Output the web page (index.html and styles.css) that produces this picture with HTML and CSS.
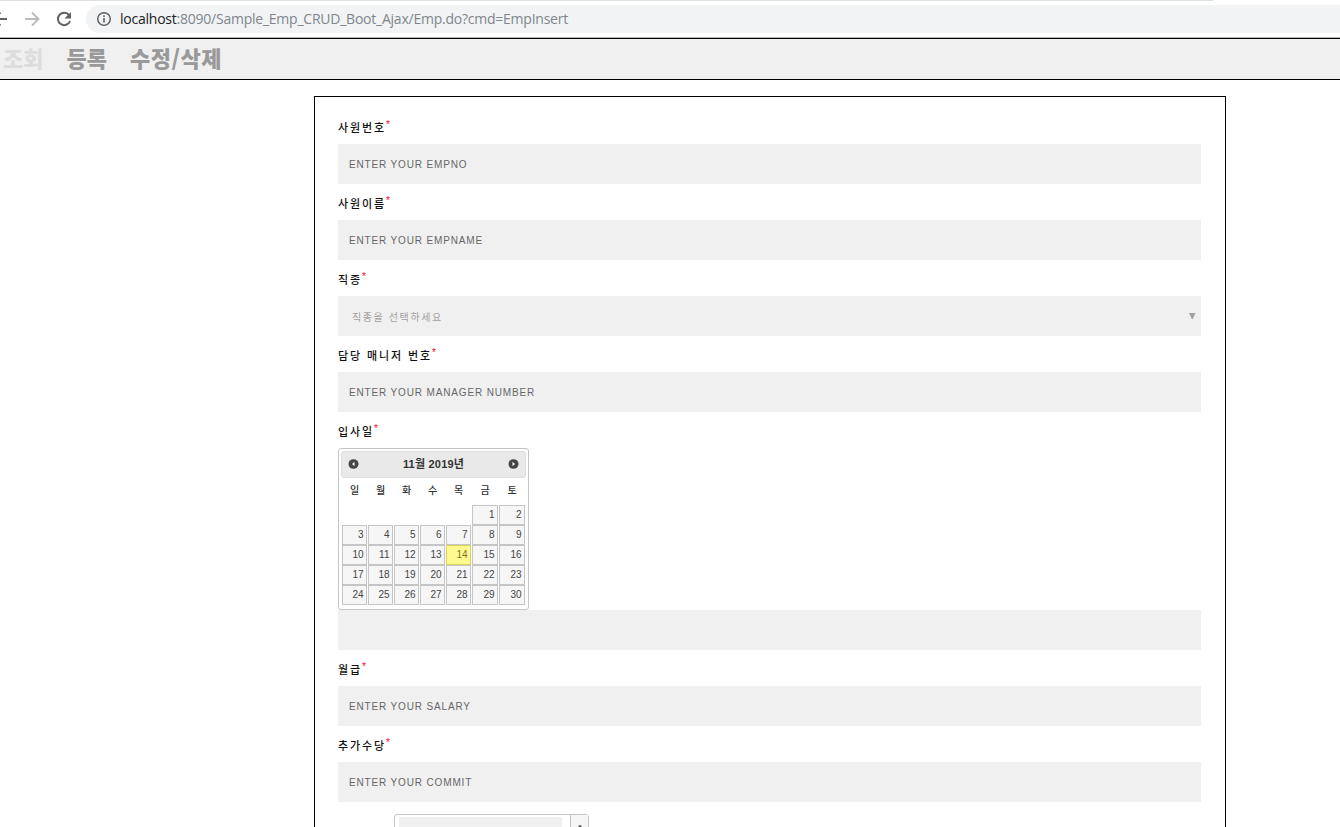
FILE: index.html
```html
<!DOCTYPE html>
<html lang="ko">
<head>
<meta charset="utf-8">
<title>Emp Insert</title>
<link rel="stylesheet" href="styles.css">
</head>
<body>
<header class="browser">
  <div class="tab-edge"></div>
  <div class="toolbar">
    <svg class="nav-icons" width="86" height="28" viewBox="0 0 86 28" fill="none" stroke-width="1.9">
      <path d="M-8 14H7M.5 7.500L-6 14l6.500 6.500" stroke="#5f6368"/>
      <path d="M25 14H38M32 7.500L38.500 14L32 20.500" stroke="#babcbe"/>
      <path d="M69.200 10.300A6.200 6.200 0 1 0 70 16" stroke="#5f6368" stroke-width="2"/>
      <path d="M71 7v6.500h-6.500z" fill="#5f6368"/>
    </svg>
    <div class="omnibox">
      <svg width="16" height="16" viewBox="0 0 16 16" fill="none" stroke="#5f6368">
        <circle cx="8" cy="8" r="6.300" stroke-width="1.500"/>
        <path d="M8 7v4.500M8 4.300v1.700" stroke-width="1.600"/>
      </svg>
      <span class="url"><span class="host">localhost</span>:8090/Sample_Emp_CRUD_Boot_Ajax/Emp.do?cmd=EmpInsert</span>
    </div>
  </div>
</header>
<nav class="menu">
  <a class="menu-item faded">조회</a>
  <a class="menu-item">등록</a>
  <a class="menu-item wide">수정/삭제</a>
</nav>
<form class="form">
  <label class="label">사원번호<span class="req">*</span></label>
  <input class="field" placeholder="ENTER YOUR EMPNO">
  <label class="label">사원이름<span class="req">*</span></label>
  <input class="field" placeholder="ENTER YOUR EMPNAME">
  <label class="label">직종<span class="req">*</span></label>
  <div class="field select"><span>직종을 선택하세요</span>
    <svg width="7" height="7" viewBox="0 0 7 7"><path d="M0 0h6.500L3.800 6h-1z" fill="#a59f9f"/></svg>
  </div>
  <label class="label">담당 매니저 번호<span class="req">*</span></label>
  <input class="field" placeholder="ENTER YOUR MANAGER NUMBER">
  <label class="label">입사일<span class="req">*</span></label>
  <div class="picker">
    <div class="picker-head">
      <svg width="11" height="11" viewBox="0 0 11 11"><ellipse cx="5.500" cy="5" rx="5" ry="4.800" fill="#444"/><path d="M6.500 2.700v4.600L4 5z" fill="#fff"/></svg>
      <span class="picker-title">11월 2019년</span>
      <svg width="11" height="11" viewBox="0 0 11 11"><ellipse cx="5.500" cy="5" rx="5" ry="4.800" fill="#444"/><path d="M4.500 2.700v4.600L7 5z" fill="#fff"/></svg>
    </div>
    <div class="week"><span>일</span><span>월</span><span>화</span><span>수</span><span>목</span><span>금</span><span>토</span></div>
    <div class="days">
      <a class="day first">1</a><a class="day">2</a>
      <a class="day">3</a><a class="day">4</a><a class="day">5</a><a class="day">6</a><a class="day">7</a><a class="day">8</a><a class="day">9</a>
      <a class="day">10</a><a class="day">11</a><a class="day">12</a><a class="day">13</a><a class="day today">14</a><a class="day">15</a><a class="day">16</a>
      <a class="day">17</a><a class="day">18</a><a class="day">19</a><a class="day">20</a><a class="day">21</a><a class="day">22</a><a class="day">23</a>
      <a class="day">24</a><a class="day">25</a><a class="day">26</a><a class="day">27</a><a class="day">28</a><a class="day">29</a><a class="day">30</a>
    </div>
  </div>
  <input class="field">
  <label class="label">월급<span class="req">*</span></label>
  <input class="field" placeholder="ENTER YOUR SALARY">
  <label class="label">추가수당<span class="req">*</span></label>
  <input class="field" placeholder="ENTER YOUR COMMIT">
  <div class="spinner">
    <div class="spinner-value"></div>
    <div class="spinner-up"><svg width="6" height="4" viewBox="0 0 6 4"><path d="M0 4L2 0h2l2 4z" fill="#777"/></svg></div>
  </div>
</form>
</body>
</html>
```
FILE: styles.css
```css
* { box-sizing: border-box; }
body {
  margin: 0;
  height: 827px;
  overflow: hidden;
  background: #fff;
  font-family: "Liberation Sans", "Noto Sans CJK KR", sans-serif;
}
.browser { height: 38px; border-bottom: 1px solid #b4b4b4; }
.tab-edge { width: 1213px; height: 1px; background: #dee1e6; }
.toolbar { display: flex; padding-top: 4px; }
.nav-icons { flex: none; }
.omnibox {
  flex: 1;
  display: flex;
  align-items: center;
  gap: 8px;
  height: 28px;
  padding-left: 10px;
  border-radius: 14px 0 0 14px;
  background: #f1f3f4;
}
.url {
  font: 14px/20px "Open Sans", sans-serif;
  letter-spacing: -0.235px;
  color: #80868b;
  white-space: nowrap;
}
.host { color: #202124; }
.menu {
  display: flex;
  gap: 23px;
  height: 42px;
  padding-left: 3px;
  border: solid #000;
  border-width: 1px 0;
  background: #f0f0f0;
}
.menu-item {
  font: 900 22px/36px "Noto Sans CJK KR", sans-serif;
  color: #999;
  white-space: nowrap;
}
.wide { letter-spacing: 0.5px; }
.faded { color: #ddd; }
.form {
  width: 912px;
  height: 760px;
  margin: 16px 0 0 314px;
  padding: 11px 24px 0 23px;
  border: 1px solid #000;
}
.label {
  display: block;
  height: 36px;
  padding-top: 11px;
  font-size: 11px;
  line-height: 18px;
  font-weight: 500;
  letter-spacing: 1.9px;
  color: #111;
}
.req {
  display: inline-block;
  font-size: 10px;
  line-height: 10px;
  letter-spacing: 0;
  color: #ff0038;
  transform: translateY(-4px);
}
.field {
  display: block;
  width: 100%;
  height: 40px;
  padding: 0 11px;
  border: 0;
  border-radius: 0;
  background: #f0f0f0;
  font-family: "Liberation Sans", "Noto Sans CJK KR", sans-serif;
  font-size: 10px;
  letter-spacing: 0.85px;
}
.field::placeholder { color: #666; opacity: 1; }
.select {
  display: flex;
  align-items: center;
  justify-content: space-between;
  padding: 0 5px 0 14px;
  letter-spacing: 1.6px;
  color: #a59f9f;
}
.picker {
  width: 191px;
  height: 162px;
  padding: 2px;
  border: 1px solid #c5c5c5;
  border-radius: 3px;
  color: #333;
}
.picker-head {
  display: flex;
  align-items: center;
  justify-content: space-between;
  height: 27px;
  padding: 0 6px;
  border: 1px solid #ddd;
  border-radius: 3px;
  background: #e9e9e9;
}
.picker-title {
  padding-bottom: 3px;
  font-size: 11px;
  font-weight: 700;
  letter-spacing: 0.2px;
}
.week, .days {
  display: grid;
  grid-template-columns: repeat(5, 25px) repeat(2, 26px);
  column-gap: 1px;
  padding-left: 1px;
}
.week { height: 27px; font-size: 10px; font-weight: 500; line-height: 25px; text-align: center; }
.days { grid-auto-rows: 20px; }
.day {
  padding-right: 2.5px;
  border: 1px solid #c5c5c5;
  background: #f6f6f6;
  color: #454545;
  font-size: 10px;
  line-height: 18px;
  text-align: right;
}
.first { grid-column: 6; }
.today { border-color: #dad55e; background: #fffa90; color: #777620; }
.spinner {
  display: flex;
  justify-content: space-between;
  width: 195px;
  height: 40px;
  margin: 12px 0 0 56px;
  border: 1px solid #c5c5c5;
  border-radius: 3px;
}
.spinner-value { width: 163px; margin: 2px 0 2px 4px; background: #f0f0f0; }
.spinner-up {
  display: flex;
  justify-content: center;
  width: 18px;
  padding-top: 10px;
  border-left: 1px solid #c5c5c5;
  background: #f6f6f6;
}
```
